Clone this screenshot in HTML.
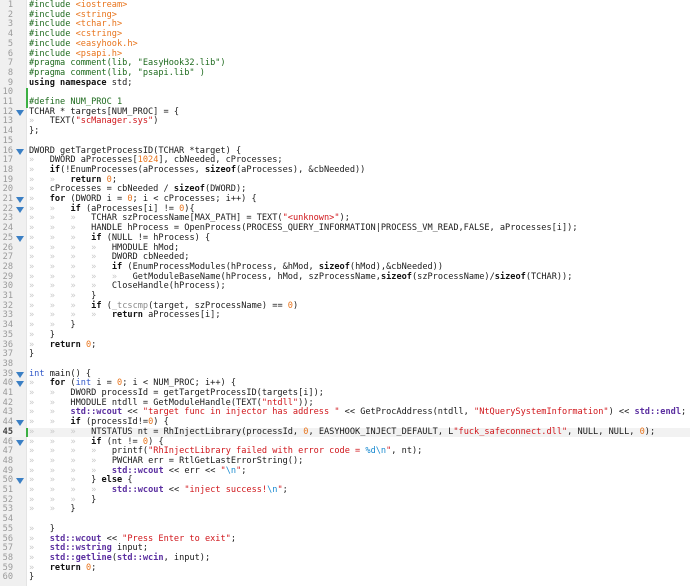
<!DOCTYPE html>
<html><head><meta charset="utf-8">
<style>
html,body{margin:0;padding:0;background:#fff;}
body{width:690px;height:586px;overflow:hidden;position:relative;font-family:"DejaVu Sans Mono","Liberation Mono",monospace;font-size:8.6px;}
#gut{position:absolute;left:0;top:0;width:26px;height:586px;background:#f0f0f0;border-right:1px solid #e4e4e4;}
.l{position:absolute;left:0;width:690px;height:9.7px;line-height:9.7px;white-space:pre;}
.n{position:absolute;left:0;width:13px;text-align:right;color:#9a9a9a;}
.c{position:absolute;left:29px;color:#1a1a1a;}
.f{position:absolute;left:16px;top:2px;width:0;height:0;border-left:4.5px solid transparent;border-right:4.5px solid transparent;border-top:6px solid #3a7fc4;}
.g{position:absolute;left:26px;width:2px;height:9.7px;background:#3cb043;}
i{font-style:normal;color:#c8c8c8;}
b{font-weight:bold;color:#111;}
.s{color:#d0161b;}
.o{color:#e8741c;}
.p{color:#1f6b1f;}
.t{color:#5b2fa0;font-weight:bold;}
.e{color:#1a8ad0;}
.ty{color:#2d55c8;}
.m{color:#8a8a8a;}
.cur{background:#f2f2f2;}
</style></head><body>
<div id="gut"></div>
<div class="l" style="top:1px"><span class="n">1</span><span class="c"><span class="p">#include</span> <span class="o">&lt;iostream&gt;</span></span></div>
<div class="l" style="top:10.7px"><span class="n">2</span><span class="c"><span class="p">#include</span> <span class="o">&lt;string&gt;</span></span></div>
<div class="l" style="top:20.4px"><span class="n">3</span><span class="c"><span class="p">#include</span> <span class="o">&lt;tchar.h&gt;</span></span></div>
<div class="l" style="top:30.1px"><span class="n">4</span><span class="c"><span class="p">#include</span> <span class="o">&lt;cstring&gt;</span></span></div>
<div class="l" style="top:39.8px"><span class="n">5</span><span class="c"><span class="p">#include</span> <span class="o">&lt;easyhook.h&gt;</span></span></div>
<div class="l" style="top:49.5px"><span class="n">6</span><span class="c"><span class="p">#include</span> <span class="o">&lt;psapi.h&gt;</span></span></div>
<div class="l" style="top:59.2px"><span class="n">7</span><span class="c"><span class="p">#pragma comment(lib, "EasyHook32.lib")</span></span></div>
<div class="l" style="top:68.9px"><span class="n">8</span><span class="c"><span class="p">#pragma comment(lib, "psapi.lib" )</span></span></div>
<div class="l" style="top:78.6px"><span class="n">9</span><span class="c"><b>using namespace</b> std;</span></div>
<div class="l" style="top:88.3px"><span class="n">10</span><span class="g"></span><span class="c"></span></div>
<div class="l" style="top:98px"><span class="n">11</span><span class="g"></span><span class="c"><span class="p">#define NUM_PROC 1</span></span></div>
<div class="l" style="top:107.7px"><span class="n">12</span><span class="f"></span><span class="c">TCHAR * targets[NUM_PROC] = {</span></div>
<div class="l" style="top:117.4px"><span class="n">13</span><span class="c"><i>»</i>   TEXT(<span class="s">"scManager.sys"</span>)</span></div>
<div class="l" style="top:127.1px"><span class="n">14</span><span class="c">};</span></div>
<div class="l" style="top:136.8px"><span class="n">15</span><span class="c"></span></div>
<div class="l" style="top:146.5px"><span class="n">16</span><span class="f"></span><span class="c">DWORD getTargetProcessID(TCHAR *target) {</span></div>
<div class="l" style="top:156.2px"><span class="n">17</span><span class="c"><i>»</i>   DWORD aProcesses[<span class="o">1024</span>], cbNeeded, cProcesses;</span></div>
<div class="l" style="top:165.9px"><span class="n">18</span><span class="c"><i>»</i>   <b>if</b>(!EnumProcesses(aProcesses, <b>sizeof</b>(aProcesses), &amp;cbNeeded))</span></div>
<div class="l" style="top:175.6px"><span class="n">19</span><span class="c"><i>»</i>   <i>»</i>   <b>return</b> <span class="o">0</span>;</span></div>
<div class="l" style="top:185.3px"><span class="n">20</span><span class="c"><i>»</i>   cProcesses = cbNeeded / <b>sizeof</b>(DWORD);</span></div>
<div class="l" style="top:195px"><span class="n">21</span><span class="f"></span><span class="c"><i>»</i>   <b>for</b> (DWORD i = <span class="o">0</span>; i &lt; cProcesses; i++) {</span></div>
<div class="l" style="top:204.7px"><span class="n">22</span><span class="f"></span><span class="c"><i>»</i>   <i>»</i>   <b>if</b> (aProcesses[i] != <span class="o">0</span>){</span></div>
<div class="l" style="top:214.4px"><span class="n">23</span><span class="c"><i>»</i>   <i>»</i>   <i>»</i>   TCHAR szProcessName[MAX_PATH] = TEXT(<span class="s">"&lt;unknown&gt;"</span>);</span></div>
<div class="l" style="top:224.1px"><span class="n">24</span><span class="c"><i>»</i>   <i>»</i>   <i>»</i>   HANDLE hProcess = OpenProcess(PROCESS_QUERY_INFORMATION|PROCESS_VM_READ,FALSE, aProcesses[i]);</span></div>
<div class="l" style="top:233.8px"><span class="n">25</span><span class="f"></span><span class="c"><i>»</i>   <i>»</i>   <i>»</i>   <b>if</b> (NULL != hProcess) {</span></div>
<div class="l" style="top:243.5px"><span class="n">26</span><span class="c"><i>»</i>   <i>»</i>   <i>»</i>   <i>»</i>   HMODULE hMod;</span></div>
<div class="l" style="top:253.2px"><span class="n">27</span><span class="c"><i>»</i>   <i>»</i>   <i>»</i>   <i>»</i>   DWORD cbNeeded;</span></div>
<div class="l" style="top:262.9px"><span class="n">28</span><span class="c"><i>»</i>   <i>»</i>   <i>»</i>   <i>»</i>   <b>if</b> (EnumProcessModules(hProcess, &amp;hMod, <b>sizeof</b>(hMod),&amp;cbNeeded))</span></div>
<div class="l" style="top:272.6px"><span class="n">29</span><span class="c"><i>»</i>   <i>»</i>   <i>»</i>   <i>»</i>   <i>»</i>   GetModuleBaseName(hProcess, hMod, szProcessName,<b>sizeof</b>(szProcessName)/<b>sizeof</b>(TCHAR));</span></div>
<div class="l" style="top:282.3px"><span class="n">30</span><span class="c"><i>»</i>   <i>»</i>   <i>»</i>   <i>»</i>   CloseHandle(hProcess);</span></div>
<div class="l" style="top:292px"><span class="n">31</span><span class="c"><i>»</i>   <i>»</i>   <i>»</i>   }</span></div>
<div class="l" style="top:301.7px"><span class="n">32</span><span class="c"><i>»</i>   <i>»</i>   <i>»</i>   <b>if</b> (<span class="m">_tcscmp</span>(target, szProcessName) == <span class="o">0</span>)</span></div>
<div class="l" style="top:311.4px"><span class="n">33</span><span class="c"><i>»</i>   <i>»</i>   <i>»</i>   <i>»</i>   <b>return</b> aProcesses[i];</span></div>
<div class="l" style="top:321.1px"><span class="n">34</span><span class="c"><i>»</i>   <i>»</i>   }</span></div>
<div class="l" style="top:330.8px"><span class="n">35</span><span class="c"><i>»</i>   }</span></div>
<div class="l" style="top:340.5px"><span class="n">36</span><span class="c"><i>»</i>   <b>return</b> <span class="o">0</span>;</span></div>
<div class="l" style="top:350.2px"><span class="n">37</span><span class="c">}</span></div>
<div class="l" style="top:359.9px"><span class="n">38</span><span class="c"></span></div>
<div class="l" style="top:369.6px"><span class="n">39</span><span class="f"></span><span class="c"><span class="ty">int</span> main() {</span></div>
<div class="l" style="top:379.3px"><span class="n">40</span><span class="f"></span><span class="c"><i>»</i>   <b>for</b> (<span class="ty">int</span> i = <span class="o">0</span>; i &lt; NUM_PROC; i++) {</span></div>
<div class="l" style="top:389px"><span class="n">41</span><span class="c"><i>»</i>   <i>»</i>   DWORD processId = getTargetProcessID(targets[i]);</span></div>
<div class="l" style="top:398.7px"><span class="n">42</span><span class="c"><i>»</i>   <i>»</i>   HMODULE ntdll = GetModuleHandle(TEXT(<span class="s">"ntdll"</span>));</span></div>
<div class="l" style="top:408.4px"><span class="n">43</span><span class="c"><i>»</i>   <i>»</i>   <span class="t">std::wcout</span> &lt;&lt; <span class="s">"target func in injector has address "</span> &lt;&lt; GetProcAddress(ntdll, <span class="s">"NtQuerySystemInformation"</span>) &lt;&lt; <span class="t">std::endl</span>;</span></div>
<div class="l" style="top:418.1px"><span class="n">44</span><span class="f"></span><span class="c"><i>»</i>   <i>»</i>   <b>if</b> (processId!=<span class="o">0</span>) {</span></div>
<div class="l cur" style="top:427.8px"><span class="n" style="color:#444;font-weight:bold">45</span><span class="g"></span><span class="c"><i>»</i>   <i>»</i>   <i>»</i>   NTSTATUS nt = RhInjectLibrary(processId, <span class="o">0</span>, EASYHOOK_INJECT_DEFAULT, L<span class="s">"fuck_safeconnect.dll"</span>, NULL, NULL, <span class="o">0</span>);</span></div>
<div class="l" style="top:437.5px"><span class="n">46</span><span class="f"></span><span class="c"><i>»</i>   <i>»</i>   <i>»</i>   <b>if</b> (nt != <span class="o">0</span>) {</span></div>
<div class="l" style="top:447.2px"><span class="n">47</span><span class="c"><i>»</i>   <i>»</i>   <i>»</i>   <i>»</i>   printf(<span class="s">"RhInjectLibrary failed with error code = </span><span class="e">%d\n</span><span class="s">"</span>, nt);</span></div>
<div class="l" style="top:456.9px"><span class="n">48</span><span class="c"><i>»</i>   <i>»</i>   <i>»</i>   <i>»</i>   PWCHAR err = RtlGetLastErrorString();</span></div>
<div class="l" style="top:466.6px"><span class="n">49</span><span class="c"><i>»</i>   <i>»</i>   <i>»</i>   <i>»</i>   <span class="t">std::wcout</span> &lt;&lt; err &lt;&lt; <span class="s">"</span><span class="e">\n</span><span class="s">"</span>;</span></div>
<div class="l" style="top:476.3px"><span class="n">50</span><span class="f"></span><span class="c"><i>»</i>   <i>»</i>   <i>»</i>   } <b>else</b> {</span></div>
<div class="l" style="top:486px"><span class="n">51</span><span class="c"><i>»</i>   <i>»</i>   <i>»</i>   <i>»</i>   <span class="t">std::wcout</span> &lt;&lt; <span class="s">"inject success!</span><span class="e">\n</span><span class="s">"</span>;</span></div>
<div class="l" style="top:495.7px"><span class="n">52</span><span class="c"><i>»</i>   <i>»</i>   <i>»</i>   }</span></div>
<div class="l" style="top:505.4px"><span class="n">53</span><span class="c"><i>»</i>   <i>»</i>   }</span></div>
<div class="l" style="top:515.1px"><span class="n">54</span><span class="c"></span></div>
<div class="l" style="top:524.8px"><span class="n">55</span><span class="c"><i>»</i>   }</span></div>
<div class="l" style="top:534.5px"><span class="n">56</span><span class="c"><i>»</i>   <span class="t">std::wcout</span> &lt;&lt; <span class="s">"Press Enter to exit"</span>;</span></div>
<div class="l" style="top:544.2px"><span class="n">57</span><span class="c"><i>»</i>   <span class="t">std::wstring</span> input;</span></div>
<div class="l" style="top:553.9px"><span class="n">58</span><span class="c"><i>»</i>   <span class="t">std::getline</span>(<span class="t">std::wcin</span>, input);</span></div>
<div class="l" style="top:563.6px"><span class="n">59</span><span class="c"><i>»</i>   <b>return</b> <span class="o">0</span>;</span></div>
<div class="l" style="top:573.3px"><span class="n">60</span><span class="c">}</span></div>
</body></html>
